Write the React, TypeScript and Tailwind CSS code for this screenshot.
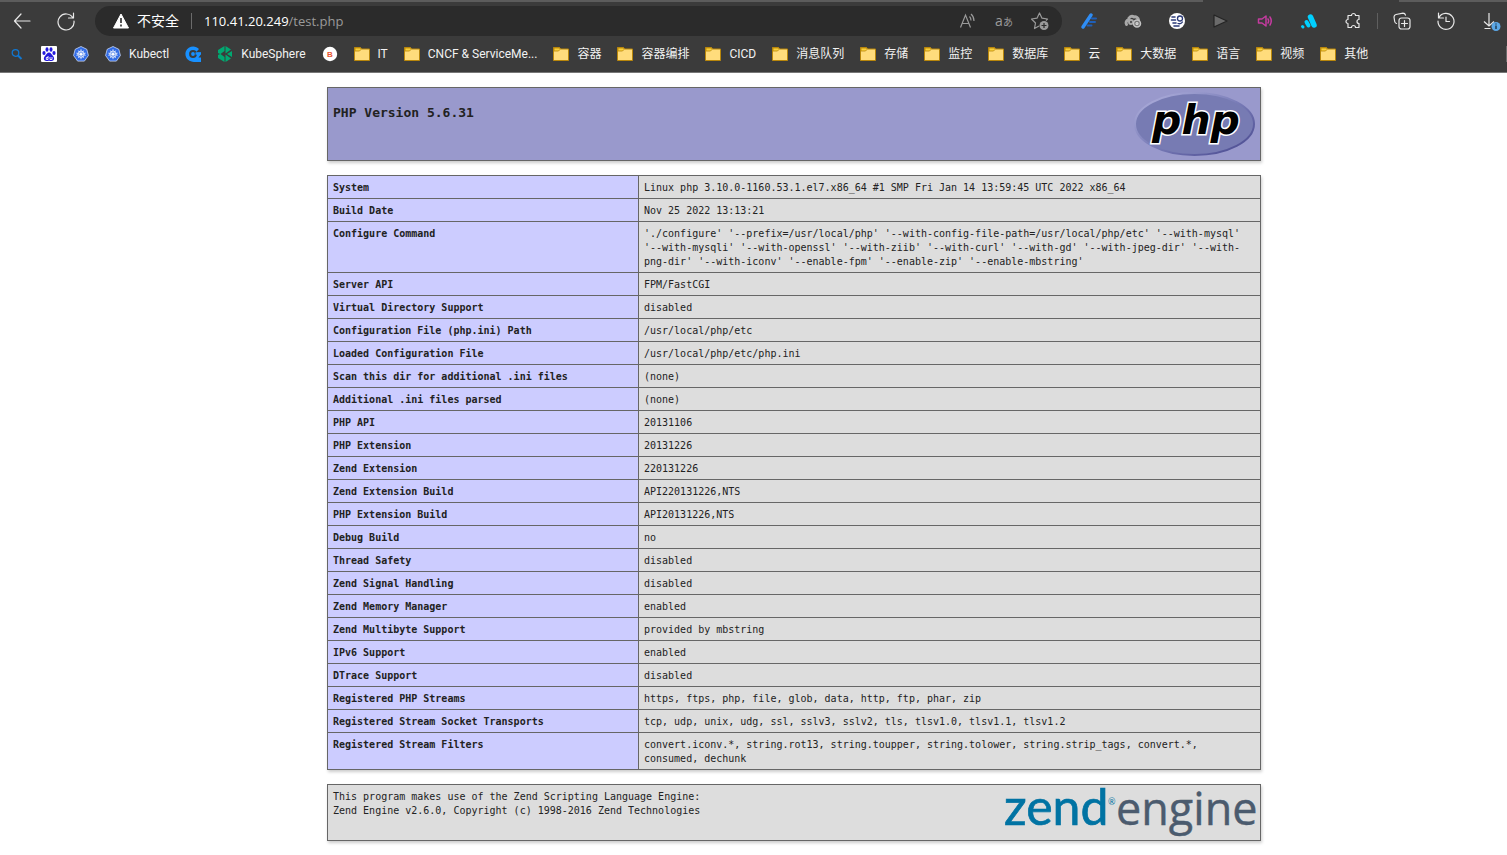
import type { ReactNode } from 'react';

type Bookmark = { label?: string; title: string; icon: ReactNode };

function FolderIcon() {
  return (
    <svg className="w-4 h-4 shrink-0" viewBox="0 0 16 16">
      <path d="M.5 14.500V1.500h6l1.200 1.500h7.800v11.500z" fill="#ffdc7c" stroke="#b8860b" />
      <path d="M1 2h5.300l.9 1.300L5.500 5H1z" fill="#f9cf3a" stroke="#b8860b" strokeWidth=".8" />
    </svg>
  );
}

function SearchIcon() {
  return (
    <svg className="w-3 h-4 shrink-0" viewBox="0 0 12 16" fill="none" stroke="#1177d1">
      <circle cx="4.500" cy="7" r="3.300" strokeWidth="1.300" />
      <path d="M7 9.500l3.500 3.500" strokeWidth="2" />
    </svg>
  );
}

function BaiduIcon() {
  return (
    <svg className="w-4 h-4 shrink-0" viewBox="0 0 16 16">
      <rect width="16" height="16" rx="1" fill="#fff" />
      <g fill="#2319dc">
        <ellipse cx="3" cy="7" rx="1.600" ry="2.100" />
        <ellipse cx="6" cy="3.500" rx="1.500" ry="2.200" />
        <ellipse cx="10" cy="3.500" rx="1.500" ry="2.200" />
        <ellipse cx="13" cy="7" rx="1.600" ry="2.100" />
        <path d="M8 6.500c2 0 2.500 2 4 3.500 2 2 1.200 5-1.500 5-1.300 0-1.700-.3-2.500-.3s-1.200.3-2.500.3c-2.700 0-3.500-3-1.500-5C5.500 8.500 6 6.500 8 6.500z" />
      </g>
      <path d="M7 10v3.500H5.300v-2H7M9 11v2.500h2V11" stroke="#fff" strokeWidth=".9" fill="none" />
    </svg>
  );
}

function KubernetesIcon() {
  return (
    <svg className="w-4 h-4 shrink-0" viewBox="0 0 16 16">
      <path d="M8 .5l5.800 2.800L15.400 9.500l-4 5.600H4.600l-4-5.600L2.200 3.300z" fill="#326ce5" stroke="#c9d8f8" strokeWidth=".8" strokeLinejoin="round" />
      <g stroke="#fff" fill="none" strokeWidth=".7">
        <circle cx="8" cy="8.200" r="3.200" />
        <path d="M8 3.200v10M3.300 9.300l9.400-2.200M3.300 7.100l9.400 2.200M5.300 4.500l5.400 7.400M10.700 4.500l-5.400 7.400" />
      </g>
      <circle cx="8" cy="8.200" r="1" fill="#fff" />
    </svg>
  );
}

function CloudIcon() {
  return (
    <svg className="w-4 h-4 shrink-0" viewBox="0 0 16 16">
      <path d="M14 3C10.500-1 3-.2.800 5.500-1 12 4 16 9 16h7v-4.500h-2.500A6 6 0 0 0 16 6.500h-5.200" fill="#1890ff" />
      <circle cx="8" cy="8" r="3.900" fill="#3b3b3b" />
      <circle cx="8" cy="8" r="1.900" fill="#1890ff" />
      <path d="M10.500 6.300h5.500v2.400h-5.500z" fill="#1890ff" />
    </svg>
  );
}

function KubeSphereIcon() {
  return (
    <svg className="w-4 h-4 shrink-0" viewBox="0 0 16 16" fill="#00a971">
      <path d="M7.500 0v5L3.500 8l4 3v5L1 12V9l2-1-2-1V4z" />
      <path d="M8.500 0L14 3.500 8.500 7.500zM15 5v6l-5-3zM8.500 8.500L14 12.500 8.500 16z" />
    </svg>
  );
}

function BetaIcon() {
  return (
    <svg className="w-4 h-4 shrink-0" viewBox="0 0 16 16">
      <circle cx="8" cy="8" r="7.200" fill="#fff" />
      <text x="8" y="11" textAnchor="middle" fontFamily="Liberation Sans" fontWeight="700" fontSize="8" fill="#e8542f">B</text>
    </svg>
  );
}

const folder = (label: string): Bookmark => ({ label, title: label, icon: <FolderIcon /> });

const bookmarks: Bookmark[] = [
  { title: 'Baidu', icon: <BaiduIcon /> },
  { title: 'Kubernetes', icon: <KubernetesIcon /> },
  { title: 'Kubectl', label: 'Kubectl', icon: <KubernetesIcon /> },
  { title: 'Cloud', icon: <CloudIcon /> },
  { title: 'KubeSphere', label: 'KubeSphere', icon: <KubeSphereIcon /> },
  { title: 'Beta', icon: <BetaIcon /> },
  folder('IT'),
  folder('CNCF & ServiceMe...'),
  folder('容器'),
  folder('容器编排'),
  folder('CICD'),
  folder('消息队列'),
  folder('存储'),
  folder('监控'),
  folder('数据库'),
  folder('云'),
  folder('大数据'),
  folder('语言'),
  folder('视频'),
  folder('其他'),
];

function ToolButton({ label, children }: { label: string; children: ReactNode }) {
  return (
    <button type="button" aria-label={label} className="w-11 h-8 shrink-0 flex items-center justify-center">
      <svg className="w-5 h-5" viewBox="0 0 20 20" fill="none" stroke="#e8e8e8" strokeWidth="1.200" strokeLinecap="round" strokeLinejoin="round">
        {children}
      </svg>
    </button>
  );
}

function AddressBar() {
  return (
    <div className="flex-1 min-w-0 ml-[7px] mr-[5px] h-[30px] rounded-full bg-[#2b2b2b] flex items-center pl-4 pr-1 text-sm">
      <svg className="w-5 h-5 shrink-0" viewBox="0 0 20 20">
        <path d="M10 3L17.500 17h-15z" fill="#fff" stroke="#fff" strokeLinejoin="round" />
        <path d="M10 7v5M10 13.500v2" stroke="#2b2b2b" strokeWidth="1.600" />
      </svg>
      <span className="ml-1.5 text-white whitespace-nowrap">不安全</span>
      <span className="mx-3 w-px h-4 bg-[#6b6b6b]" />
      <span className="flex-1 text-[13px] text-[#9a9a9a] whitespace-nowrap">
        <span className="text-white">110.41.20.249</span>/test.php
      </span>
      <button type="button" aria-label="Read aloud" className="w-9 flex justify-center">
        <svg className="w-5 h-5" viewBox="0 0 20 20" fill="none" stroke="#9a9a9a" strokeWidth="1.200">
          <path d="M2.500 16.500L7.500 4l5 12.500M4.300 12.500h6.500M11.500 5.500q1.500 1.500 1.500 4M13 3q3 2.500 3 7" />
        </svg>
      </button>
      <button type="button" aria-label="Translate" className="w-9 text-[#9a9a9a] whitespace-nowrap text-center">
        a<span className="text-[10px]">あ</span>
      </button>
      <button type="button" aria-label="Add to favorites" className="w-9 flex justify-center">
        <svg className="w-5 h-5" viewBox="0 0 20 20" fill="none" stroke="#9a9a9a" strokeWidth="1.200" strokeLinejoin="round">
          <path d="M9 15l-4.500 2.500 1-5.500L1.500 8l5.500-.8L9.500 2 12 7.200l5.500.8-1.500 1.500" />
          <circle cx="14" cy="14.500" r="4.500" fill="#9a9a9a" stroke="none" />
          <path d="M14 12v5M11.500 14.500h5" stroke="#2b2b2b" />
        </svg>
      </button>
    </div>
  );
}

function Toolbar() {
  return (
    <div className="flex items-center h-[34px] mt-0.5">
      <ToolButton label="Back">
        <path d="M18 10H2.500M9 3L2.500 10 9 17" />
      </ToolButton>
      <ToolButton label="Reload">
        <path d="M17 7a8 8 0 1 0 1 3M17.500 2v5h-5" />
      </ToolButton>
      <AddressBar />
      <ToolButton label="Pencil">
        <path d="M4 16L12 4" stroke="#2f8df5" strokeWidth="3.500" />
        <path d="M13 7.500h4M11 11h5M8.500 14.500h4" stroke="#1f5fb8" strokeWidth="2" />
      </ToolButton>
      <ToolButton label="Proxy">
        <path d="M3.500 13.500a3 3 0 0 1 2-4.500 3.500 3.500 0 0 1 5.500-3 3.500 3.500 0 0 1 4.500 3" stroke="#a9a9a9" strokeWidth="3" />
        <circle cx="8" cy="11" r="2" stroke="#a9a9a9" strokeWidth="2" />
        <circle cx="14" cy="12.500" r="3.500" fill="#777" stroke="#c4c4c4" strokeWidth="1.500" />
        <circle cx="14" cy="12.500" r="1" stroke="#ddd" />
      </ToolButton>
      <ToolButton label="Developer tools">
        <circle cx="10" cy="10" r="8" fill="#fff" stroke="none" />
        <path d="M5 6h3M4.500 9h4M6 12h3M7 15h5" stroke="#2b3a78" strokeWidth="1.600" />
        <circle cx="13" cy="7.500" r="2.500" stroke="#2b3a78" strokeWidth="1.300" />
        <path d="M11 12.500q3 1 4.500-1.500" stroke="#2b3a78" strokeWidth="1.300" />
      </ToolButton>
      <ToolButton label="Play">
        <path d="M3 4v12l13-6z" fill="#6b6b6b" stroke="#242424" />
      </ToolButton>
      <ToolButton label="Volume">
        <path d="M3.500 8v4h3.500l4 3V5L7 8zM13 8q1.200 2 0 4M15 6q2.500 4 0 8" stroke="#c53ba0" strokeWidth="1.500" />
      </ToolButton>
      <ToolButton label="Analytics">
        <g stroke="#00d0ff">
          <path d="M11.500 6l3.500 8" strokeWidth="5.500" />
          <path d="M7.500 11l2 3.500" strokeWidth="4" />
          <path d="M3.500 15.500l.500.500" strokeWidth="3" />
        </g>
      </ToolButton>
      <ToolButton label="Extensions">
        <path d="M5 4.500h3.500a2 2 0 1 1 4 0H16v4a2 2 0 1 0 0 4v4h-3.500a2 2 0 1 0-4 0H5v-4a2 2 0 1 1 0-4z" />
      </ToolButton>
      <span className="w-px h-4 mx-0.5 bg-[#5f5f5f]" />
      <ToolButton label="Collections">
        <path d="M4.500 12.500Q3 12 2.700 10.500L2 6q0-2 2-2.500l7-1.300q2 0 2.500 2" />
        <rect x="7" y="7" width="11" height="11" rx="2.500" />
        <path d="M12.500 9.500v6M9.500 12.500h6" />
      </ToolButton>
      <ToolButton label="History">
        <path d="M3 6.500A8 8 0 1 1 2 10M2.500 2v5h5M10 6v4.500h3.500" />
      </ToolButton>
      <button type="button" aria-label="Downloads" className="w-[39px] h-8 shrink-0 flex items-center justify-center">
        <svg className="w-5 h-5 ml-1.5" viewBox="0 0 20 20" fill="none" stroke="#e8e8e8" strokeWidth="1.200">
          <path d="M8 2v13M3 10.500l5 4.500 5-4.500M3.500 17.500h6" />
          <circle cx="15" cy="15.500" r="4.500" fill="#5ba7e6" stroke="none" />
          <path d="M15 14.500v3.500M15 12.500v1" stroke="#123" />
        </svg>
      </button>
    </div>
  );
}

function BrowserChrome() {
  return (
    <header className="bg-[#3b3b3b] h-[73px] border-b border-b-[#777] overflow-hidden font-['Open_Sans','Noto_Sans_CJK_SC',sans-serif]">
      {/* Lower edge of the tab strip, open under the active tab */}
      <div className="flex h-0.5">
        <span className="flex-1 bg-[#5c5c5c]" />
        <span className="w-[196px]" />
        <span className="w-[108px] bg-[#5c5c5c]" />
      </div>
      <Toolbar />
      <nav className="flex items-center gap-4 h-8 pl-[11px] text-xs text-[#f2f2f2] font-[Roboto,'Noto_Sans_CJK_SC',sans-serif]">
        <button type="button" aria-label="Search" className="mr-0.5">
          <SearchIcon />
        </button>
        {bookmarks.map((item) => (
          <a key={item.title} href="#" aria-label={item.title} className="flex items-center gap-2 shrink-0 whitespace-nowrap">
            {item.icon}
            {item.label && <span>{item.label}</span>}
          </a>
        ))}
        <span className="ml-auto w-px h-4 bg-[#6b6b6b]" />
      </nav>
    </header>
  );
}

const info: [string, string][] = [
  ['System', 'Linux php 3.10.0-1160.53.1.el7.x86_64 #1 SMP Fri Jan 14 13:59:45 UTC 2022 x86_64'],
  ['Build Date', 'Nov 25 2022 13:13:21'],
  [
    'Configure Command',
    "'./configure' '--prefix=/usr/local/php' '--with-config-file-path=/usr/local/php/etc' '--with-mysql' '--with-mysqli' '--with-openssl' '--with-ziib' '--with-curl' '--with-gd' '--with-jpeg-dir' '--with-png-dir' '--with-iconv' '--enable-fpm' '--enable-zip' '--enable-mbstring'",
  ],
  ['Server API', 'FPM/FastCGI'],
  ['Virtual Directory Support', 'disabled'],
  ['Configuration File (php.ini) Path', '/usr/local/php/etc'],
  ['Loaded Configuration File', '/usr/local/php/etc/php.ini'],
  ['Scan this dir for additional .ini files', '(none)'],
  ['Additional .ini files parsed', '(none)'],
  ['PHP API', '20131106'],
  ['PHP Extension', '20131226'],
  ['Zend Extension', '220131226'],
  ['Zend Extension Build', 'API220131226,NTS'],
  ['PHP Extension Build', 'API20131226,NTS'],
  ['Debug Build', 'no'],
  ['Thread Safety', 'disabled'],
  ['Zend Signal Handling', 'disabled'],
  ['Zend Memory Manager', 'enabled'],
  ['Zend Multibyte Support', 'provided by mbstring'],
  ['IPv6 Support', 'enabled'],
  ['DTrace Support', 'disabled'],
  ['Registered PHP Streams', 'https, ftps, php, file, glob, data, http, ftp, phar, zip'],
  ['Registered Stream Socket Transports', 'tcp, udp, unix, udg, ssl, sslv3, sslv2, tls, tlsv1.0, tlsv1.1, tlsv1.2'],
  ['Registered Stream Filters', 'convert.iconv.*, string.rot13, string.toupper, string.tolower, string.strip_tags, convert.*, consumed, dechunk'],
];

function PhpLogo() {
  return (
    <svg className="w-[121px] h-16 shrink-0" viewBox="0 0 121 64" role="img" aria-label="PHP logo">
      <defs>
        <linearGradient id="rim" x1="0" y1="0" x2="1" y2="1">
          <stop offset="0" stopColor="#b5b5e0" />
          <stop offset=".5" stopColor="#7a7db8" />
          <stop offset="1" stopColor="#45458c" />
        </linearGradient>
      </defs>
      <ellipse cx="60.500" cy="32" rx="59.500" ry="31" fill="#777bb3" stroke="url(#rim)" strokeWidth="2" />
      <text
        x="62"
        y="42"
        textAnchor="middle"
        fontFamily="DejaVu Sans"
        fontWeight="700"
        fontStyle="italic"
        fontSize="41"
        fill="#000"
        stroke="#fff"
        strokeWidth="3"
        paintOrder="stroke"
      >
        php
      </text>
    </svg>
  );
}

function ZendLogo() {
  return (
    <svg className="w-[252px] h-[47px] shrink-0 overflow-visible" viewBox="0 0 252 47" role="img" aria-label="Zend Engine logo">
      <text x="1" y="35" fontFamily="Lato" fontSize="50" fill="#0073a3" stroke="#0073a3" strokeWidth=".7">zend</text>
      <text x="105" y="15" fontFamily="Lato" fontSize="9" fill="#0073a3">®</text>
      <text x="113" y="35" fontFamily="Open Sans" fontSize="45" fill="#4b5b6e" stroke="#4b5b6e" strokeWidth=".4">engine</text>
    </svg>
  );
}

export default function App() {
  return (
    <div className="min-h-screen bg-white text-[#222]">
      <BrowserChrome />
      <main className="flex justify-center pl-[81px] pt-3.5 pb-3.5 font-['DejaVu_Sans_Mono',monospace] text-[10px] leading-[14px]">
        <div className="w-[934px] flex flex-col gap-3.5">
          {/* Version banner */}
          <section className="flex justify-between bg-[#9999cc] border border-[#666] px-[5px] py-1 shadow-[1px_2px_3px_#ccc]">
            <h1 className="mt-3 text-[13px] leading-[18px] font-bold">PHP Version 5.6.31</h1>
            <PhpLogo />
          </section>

          {/* General information */}
          <table className="w-full table-fixed border-collapse shadow-[1px_2px_3px_#ccc]">
            <tbody>
              {info.map(([name, value]) => (
                <tr key={name}>
                  <th scope="row" className="w-1/3 bg-[#ccccff] border border-[#666] px-[5px] pt-[5px] pb-[3px] text-left align-top font-bold">
                    {name}
                  </th>
                  <td className="bg-[#dddddd] border border-[#666] px-[5px] pt-[5px] pb-[3px] align-top">{value}</td>
                </tr>
              ))}
            </tbody>
          </table>

          {/* Zend credits */}
          <section className="flex items-start justify-between bg-[#dddddd] border border-[#666] px-[5px] pt-[5px] pb-[3px] shadow-[1px_2px_3px_#ccc]">
            <p>
              This program makes use of the Zend Scripting Language Engine:
              <br />
              Zend Engine v2.6.0, Copyright (c) 1998-2016 Zend Technologies
            </p>
            <ZendLogo />
          </section>
        </div>
      </main>
    </div>
  );
}
